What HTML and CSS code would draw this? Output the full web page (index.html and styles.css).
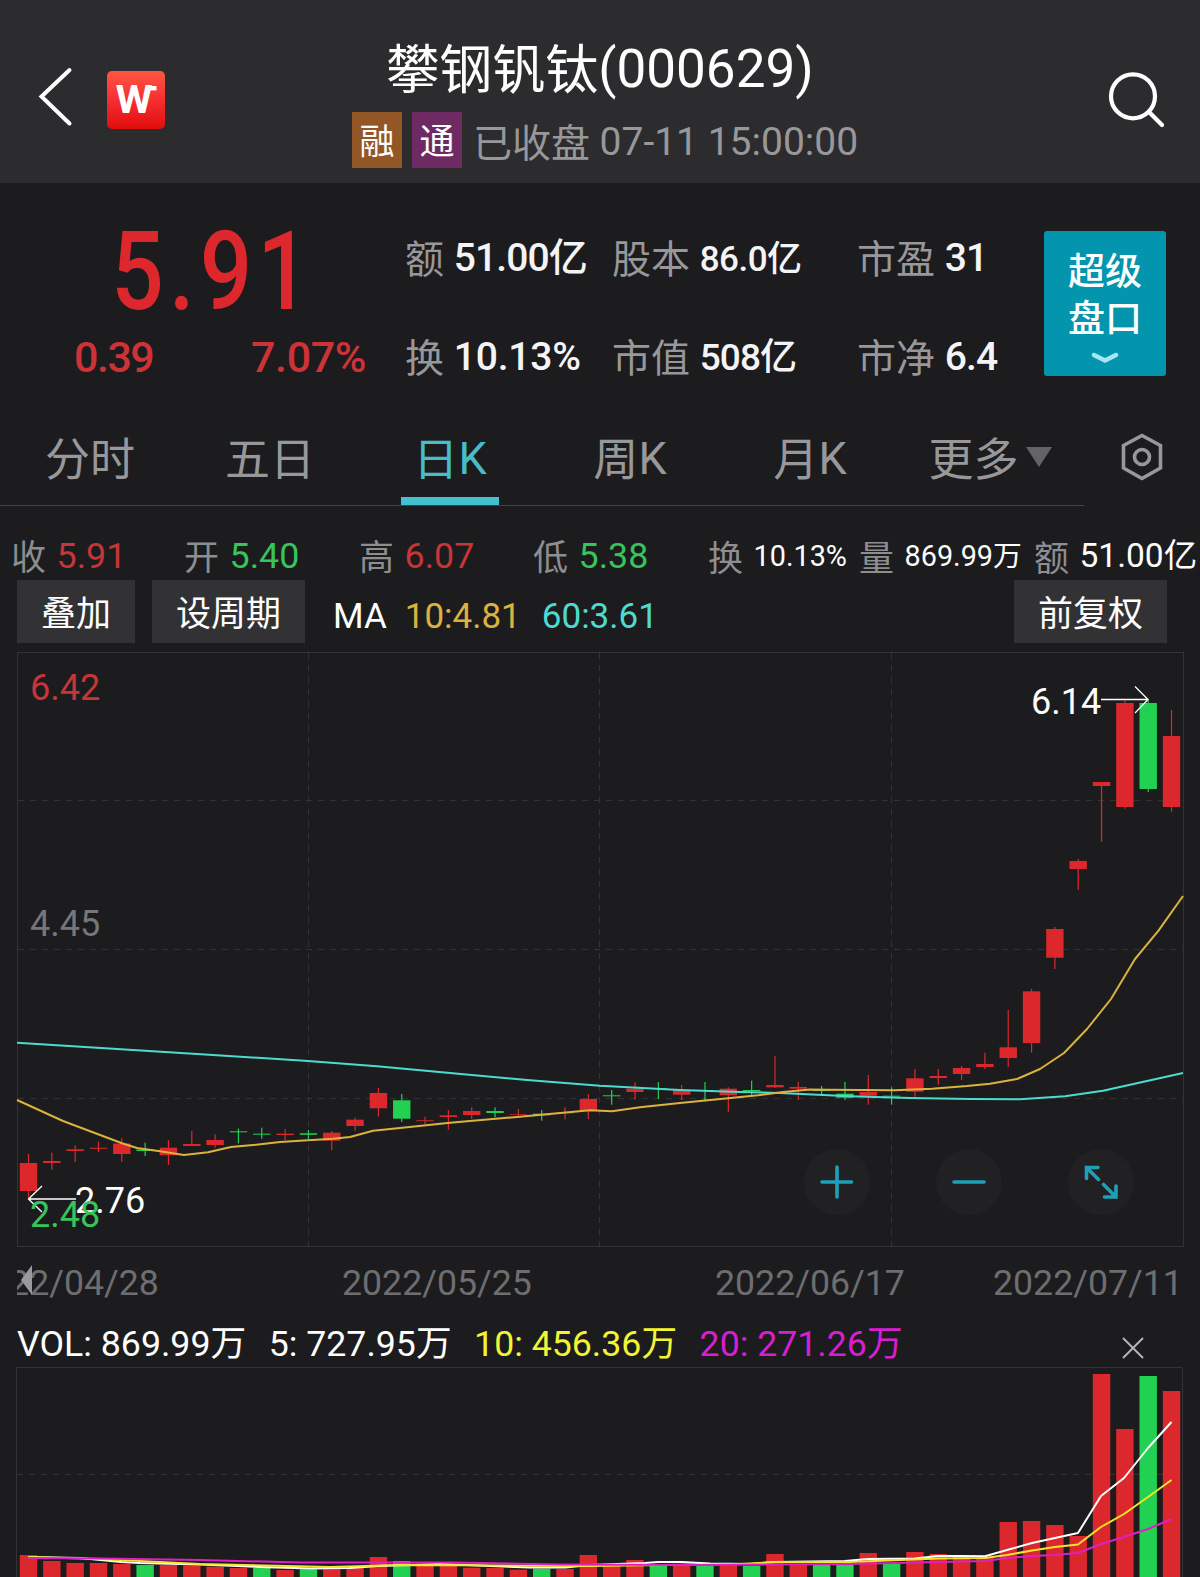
FILE: index.html
```html
<!DOCTYPE html>
<html lang="zh-CN">
<head>
  <meta charset="UTF-8">
  <meta name="viewport" content="width=device-width, initial-scale=1">
  <title>攀钢钒钛(000629)</title>
  <link rel="stylesheet" href="styles.css">
</head>
<body>

<header class="header">
  <div class="header-left">
    <svg class="back" width="40" height="64" viewBox="0 0 40 64"><path d="M34.500 6 L6.500 32.500 L34.500 59.500"/></svg>
    <div class="logo">
      <svg width="58" height="58" viewBox="0 0 58 58">
        <text x="8.500" y="42" textLength="37" lengthAdjust="spacingAndGlyphs">W</text>
        <path d="M42 17.200 h7.500"/>
      </svg>
    </div>
  </div>
  <div class="header-title">
    <h1><span class="cjk">攀钢钒钛</span>(000629)</h1>
    <div class="status">
      <span class="badge badge-rong">融</span>
      <span class="badge badge-tong">通</span>
      <span class="status-text"><span class="cjk">已收盘</span> 07-11 15:00:00</span>
    </div>
  </div>
  <svg class="search" width="64" height="64" viewBox="0 0 64 64">
    <circle cx="29" cy="28.300" r="22"/>
    <path d="M45 44 L58 57"/>
  </svg>
</header>

<section class="quote">
  <div class="price-box">
    <div class="price"><span>5.91</span></div>
    <div class="change"><span class="diff">0.39</span><span>7.07%</span></div>
  </div>
  <div class="stats">
    <div><span class="cjk">额</span> <b>51.00亿</b></div>
    <div><span class="cjk">股本</span> <b class="s35">86.0亿</b></div>
    <div><span class="cjk">市盈</span> <b>31</b></div>
    <div><span class="cjk">换</span> <b class="wide">10.13%</b></div>
    <div><span class="cjk">市值</span> <b class="s38">508亿</b></div>
    <div><span class="cjk">市净</span> <b>6.4</b></div>
  </div>
  <div class="super-btn">
    超级<br>盘口
    <svg width="30" height="14" viewBox="0 0 30 14"><path d="M4 4 L15 9.500 L26 4"/></svg>
  </div>
</section>

<div class="tabs-row">
  <nav class="tabs">
    <a><span class="cjk">分时</span></a>
    <a><span class="cjk">五日</span></a>
    <a class="active"><span class="cjk">日</span>K</a>
    <a><span class="cjk">周</span>K</a>
    <a><span class="cjk">月</span>K</a>
    <a><span class="cjk">更多</span><i class="caret"></i></a>
  </nav>
  <svg class="setting" width="44" height="50" viewBox="0 0 44 50">
    <path d="M22 3.500 L40.500 13.500 V36 L22 46.500 L3.500 36 V13.500 Z"/>
    <circle cx="22" cy="25" r="7.500"/>
  </svg>
</div>

<div class="ohlc">
  <div><i class="cjk">收</i><span class="red">5.91</span></div>
  <div><i class="cjk">开</i><span class="green">5.40</span></div>
  <div><i class="cjk">高</i><span class="red">6.07</span></div>
  <div><i class="cjk">低</i><span class="green">5.38</span></div>
  <div><i class="cjk">换</i><span class="small">10.13%</span></div>
  <div><i class="cjk">量</i><span class="small">869.99万</span></div>
  <div><i class="cjk">额</i><span class="mid">51.00亿</span></div>
</div>

<div class="toolbar">
  <button class="btn">叠加</button>
  <button class="btn">设周期</button>
  <div class="ma"><span>MA</span><span class="ma10">10:4.81</span><span class="ma60">60:3.61</span></div>
  <button class="btn btn-right">前复权</button>
</div>

<svg class="chart" width="1200" height="607" viewBox="0 643 1200 607">
  <g class="grid">
    <path class="dash" d="M308.500 653 V1246 M599.500 653 V1246 M891.500 653 V1246"/>
    <path class="dash" d="M18 800.500 H1183 M18 949.500 H1183 M18 1098.500 H1183"/>
    <rect x="17.500" y="652.500" width="1166" height="594"/>
  </g>
  <g id="candles"></g>
  <polyline class="line line-ma60" points="17,1042.7 117,1049 217,1055.3 308,1061 377,1066.3 450,1073 527,1080 600,1085.7 680,1090 740,1092 780,1093 850,1096.3 910,1098 970,1099 1020,1099.3 1065,1096.3 1103,1090.7 1147,1081 1183,1073"/>
  <polyline class="line line-ma10" points="17,1100 63,1121 122,1143.3 137,1148 160,1151.3 184,1155 208,1152.3 231,1147 253,1145 280,1142 308,1140.3 333,1138.7 350,1137 373,1130.7 400,1128 450,1122.7 517,1117 590,1110.3 612,1111.3 640,1107.3 680,1103 728,1098.3 758,1095.3 783,1092 810,1089.5 827,1089.7 895,1090.3 932,1088.7 967,1086 990,1083.7 1017,1079 1040,1069 1064,1053 1087,1029 1111,999 1135,959 1158.5,930.7 1183,896"/>
  <path class="arrow" d="M1101 699.500 H1148 M1135 686.500 L1148 699.500 L1135 713"/>
  <path class="arrow" d="M76 1199 H28.500 M42 1186 L28.500 1199 L42 1212"/>
  <text class="white" x="1031" y="714">6.14</text>
  <text class="white" x="75" y="1213">2.76</text>
  <text class="red" x="30" y="700">6.42</text>
  <text class="gray" x="30" y="936">4.45</text>
  <text class="green" x="30" y="1227">2.48</text>
  <g class="zoom-btns">
    <circle cx="837" cy="1182" r="33"/>
    <circle cx="969" cy="1182" r="33"/>
    <circle cx="1101" cy="1182" r="33"/>
    <path d="M822 1182 H851.500 M837 1167 V1197"/>
    <path d="M954 1182 H984"/>
    <path d="M1086.500 1178.500 V1167.500 H1098 M1086.500 1167.500 L1098.500 1179.500"/>
    <path d="M1116 1186 V1197 H1104.500 M1116 1197 L1103.500 1184.500"/>
  </g>
</svg>

<div class="dates">
  <span>2022/04/28</span>
  <span>2022/05/25</span>
  <span>2022/06/17</span>
  <span>2022/07/11</span>
  <i class="prev"></i>
</div>

<div class="vol-info">
  <span>VOL: 869.99万</span>
  <span>5: 727.95万</span>
  <span class="yellow">10: 456.36万</span>
  <span class="pink">20: 271.26万</span>
  <svg class="close" width="24" height="24" viewBox="0 0 24 24"><path d="M2 2 L22 22 M22 2 L2 22"/></svg>
</div>

<svg class="chart" width="1200" height="210" viewBox="0 1367 1200 210">
  <g class="grid">
    <path class="dash" d="M17 1474.500 H1182"/>
    <path d="M16.500 1577 V1367.500 H1182.500 V1577"/>
  </g>
  <g id="volumes"></g>
  <polyline class="line line-white" points="28.5,1557 80,1558 121,1562 140,1563 200,1564.5 260,1567 310,1568.5 350,1568 378,1566 440,1564 490,1566 530,1567.5 565,1567.5 590,1565 645,1563 658,1562 682,1562 710,1563.5 750,1564 775,1562 845,1561 868,1559 915,1558.5 938,1556 960,1556 985,1556.3 1007,1550 1032,1543 1055,1538 1078,1533 1101,1496 1124,1478 1148,1448 1171.5,1422"/>
  <polyline class="line line-yellow" points="28.5,1557 100,1559 200,1564 330,1567 400,1565 590,1566 740,1564 775,1562 850,1562 938,1558.5 985,1558 1007,1555 1032,1550.5 1055,1547 1078,1544.5 1101,1527 1124,1514 1148,1497 1171.5,1480"/>
  <polyline class="line line-pink" points="28.5,1558 100,1558.5 200,1560 300,1562.5 450,1562.5 560,1564.5 700,1565 850,1564 938,1562 985,1561 1007,1558 1032,1556 1055,1555 1078,1553 1101,1544 1124,1537 1148,1529 1171.5,1519"/>
</svg>

<script src="chart.js"></script>
</body>
</html>
```
FILE: styles.css
```css
* {
  box-sizing: border-box;
}
body {
  margin: 0;
  width: 1200px;
  height: 1577px;
  overflow: hidden;
  background: #1c1c1e;
  color: #fff;
  font-family: Roboto, "Noto Sans CJK SC", sans-serif;
}
svg {
  display: block;
}
.cjk {
  font-style: normal;
  line-height: 1;
  vertical-align: -2px;
}

/* header */
.header {
  display: flex;
  justify-content: space-between;
  height: 183px;
  background: #2c2c2e;
}
.header-left {
  display: flex;
  width: 300px;
  padding-left: 35px;
}
.back {
  margin-top: 64px;
  fill: none;
  stroke: #fff;
  stroke-width: 4;
  stroke-linecap: round;
}
.logo {
  width: 58px;
  height: 58px;
  margin: 71px 0 0 32px;
  border-radius: 5px;
  background: linear-gradient(#ff5640, #f52f33 50%, #e00c0c);
}
.logo text {
  fill: #fff;
  font-size: 38px;
  font-weight: 700;
}
.logo path {
  stroke: #fff;
  stroke-width: 4.4;
}
.header-title {
  padding-top: 39px;
  text-align: center;
}
h1 {
  margin: 0;
  font-size: 53px;
  font-weight: 400;
  line-height: 60px;
}
.status {
  display: flex;
  justify-content: center;
  margin: 13px 0 0 10px;
}
.badge {
  width: 50px;
  height: 56px;
  margin-right: 10px;
  font-size: 35px;
  line-height: 61px;
}
.badge-rong {
  background: #935627;
}
.badge-tong {
  background: #6e2b63;
}
.status-text {
  height: 56px;
  padding-left: 1px;
  color: #98989a;
  font-size: 39px;
  line-height: 60px;
}
.search {
  margin: 68px 32px 0 204px;
  fill: none;
  stroke: #fff;
  stroke-width: 4.2;
  stroke-linecap: round;
}

/* quote */
.quote {
  display: flex;
  height: 229px;
  padding-top: 26px;
}
.price-box {
  width: 405px;
  padding-top: 8px;
}
.price {
  width: 426px;
  color: #dc282c;
  font-size: 110px;
  font-weight: 500;
  line-height: 110px;
  letter-spacing: 6px;
  text-align: center;
}
.price span {
  display: inline-block;
  transform: scaleX(0.84);
}
.change {
  display: flex;
  justify-content: space-between;
  padding: 0 39px 0 74px;
  margin-top: 5px;
  color: #cd3237;
  font-size: 43px;
  font-weight: 500;
  line-height: 50px;
  letter-spacing: -0.4px;
}
.change .diff {
  letter-spacing: -1.5px;
}
.stats {
  display: grid;
  grid-template-columns: 207px 245px 187px;
  grid-template-rows: 99px 99px;
  color: #98989a;
  font-size: 39px;
  line-height: 99px;
  white-space: nowrap;
}
.stats b {
  color: #f4f4f6;
  font-weight: 500;
  letter-spacing: -0.9px;
}
.stats .wide {
  letter-spacing: -0.2px;
}
.stats .s35 {
  font-size: 35px;
  letter-spacing: -0.5px;
}
.stats .s38 {
  font-size: 37px;
}
.super-btn {
  width: 122px;
  height: 145px;
  margin-top: 22px;
  padding-top: 18px;
  border-radius: 3px;
  background: #0394ae;
  font-size: 37px;
  font-weight: 500;
  line-height: 47px;
  text-align: center;
}
.super-btn svg {
  margin: 8px auto 0;
  fill: none;
  stroke: #a8e6f4;
  stroke-width: 4.5;
  stroke-linecap: round;
  stroke-linejoin: round;
}

/* tabs */
.tabs-row {
  display: flex;
  height: 94px;
}
.tabs {
  display: grid;
  grid-template-columns: repeat(6, 180px);
  width: 1084px;
  border-bottom: 1px solid #434345;
  color: #98989a;
  font-size: 45px;
  line-height: 93px;
  text-align: center;
}
.tabs a {
  position: relative;
  white-space: nowrap;
}
.tabs .active {
  color: #48bccb;
}
.tabs .active::after {
  content: "";
  position: absolute;
  left: 41px;
  bottom: 0;
  width: 98px;
  height: 8px;
  background: #43c0d0;
}
.caret {
  display: inline-block;
  margin-left: 7px;
  border: 13.5px solid transparent;
  border-top: 20px solid #646466;
  border-bottom: 0;
  vertical-align: 7px;
}
.setting {
  margin: 20px 0 0 36px;
  fill: none;
  stroke: #98989a;
  stroke-width: 3.6;
}

/* ohlc */
.ohlc {
  display: grid;
  grid-template-columns: 173px 175px 174px 175px 151px 175px 166px;
  height: 44px;
  margin-top: 28px;
  padding-left: 11px;
  color: #8e8e90;
  font-size: 35px;
  line-height: 44px;
  white-space: nowrap;
}
.ohlc span {
  margin-left: 10.5px;
  font-size: 35.8px;
}
.red {
  color: #c73539;
  fill: #c73539;
}
.green {
  color: #37c45b;
  fill: #37c45b;
}
.ohlc .small {
  color: #fff;
  font-size: 28.8px;
  vertical-align: 2.5px;
}
.ohlc .mid {
  color: #fff;
  font-size: 33.5px;
  vertical-align: 1.5px;
}

/* toolbar */
.toolbar {
  display: flex;
  height: 63px;
  margin-top: 2px;
  padding: 0 33px 0 17px;
}
.btn {
  margin: 0 17px 0 0;
  padding: 7px 24px 0;
  border: 0;
  background: #323234;
  color: #fff;
  font-family: inherit;
  font-size: 35px;
  line-height: 56px;
}
.btn-right {
  margin: 0 0 0 auto;
}
.ma {
  display: flex;
  margin-left: 11px;
  font-size: 35px;
  line-height: 74px;
}
.ma10 {
  margin-left: 18px;
  color: #dcb23e;
}
.ma60 {
  margin-left: 21px;
  color: #4cdccf;
}

/* charts */
.chart text {
  font-size: 36px;
}
.white {
  fill: #fff;
}
.gray {
  fill: #77777a;
}
.grid {
  fill: none;
  stroke: #333335;
}
.dash {
  stroke-dasharray: 6 6;
}
.line {
  fill: none;
  stroke-width: 2;
  stroke-linejoin: round;
}
.line-ma10 {
  stroke: #dcb23e;
}
.line-ma60 {
  stroke: #4cdccf;
}
.line-white {
  stroke: #fff;
}
.line-yellow {
  stroke: #f4e52a;
}
.line-pink {
  stroke: #dd20c4;
}
.arrow {
  fill: none;
  stroke: #fff;
  stroke-width: 1.3;
}
.up {
  fill: #dc282c;
}
.down {
  fill: #22d052;
}
.zoom-btns circle {
  fill: #212124;
}
.zoom-btns path {
  fill: none;
  stroke: #1fa0b9;
  stroke-width: 3.6;
  stroke-linecap: round;
}

/* dates */
.dates {
  position: relative;
  display: flex;
  height: 66px;
  margin-left: 17px;
  overflow: hidden;
  color: #6e6e70;
  font-size: 35.7px;
  line-height: 66px;
}
.dates span {
  flex: none;
  width: 190px;
  margin-right: 183px;
}
.dates span:first-child {
  margin-left: -48px;
}
.dates span:nth-child(3) {
  margin-right: 88px;
}
.prev {
  position: absolute;
  left: 4px;
  top: 15px;
  border: 15.5px solid transparent;
  border-right: 11px solid #9a9a9c;
  border-left: 0;
}

/* volume */
.vol-info {
  display: flex;
  height: 51px;
  padding: 5px 55px 0 17px;
  font-size: 35.7px;
  line-height: 47px;
  white-space: pre;
}
.vol-info span {
  margin-right: 22.5px;
}
.yellow {
  color: #f2f535;
}
.pink {
  color: #d61fd0;
}
.close {
  margin: 15px 0 0 auto;
  stroke: #b4b4b6;
  stroke-width: 2;
}
```
FILE: chart.js
```js
// [up/down, body top, body bottom, high, low]
const candles = [
  ['r', 1163, 1191, 1154, 1198], ['r', 1161, 1163, 1152.5, 1169.5], ['r', 1149.3, 1151, 1145.5, 1162],
  ['r', 1147.8, 1148.8, 1141.5, 1152], ['r', 1143.5, 1154, 1138, 1162], ['g', 1149.5, 1151, 1142.7, 1156],
  ['r', 1147.7, 1155.3, 1140, 1165], ['r', 1144, 1146, 1131, 1146], ['r', 1140, 1145, 1134.5, 1147.5],
  ['g', 1131.3, 1132.3, 1128.5, 1143.3], ['g', 1133.7, 1134.7, 1127.7, 1138.7], ['r', 1133.7, 1135, 1129, 1140],
  ['g', 1133.3, 1134.8, 1130, 1139], ['r', 1132.7, 1140.7, 1131, 1150], ['r', 1119.7, 1126, 1117.5, 1130.7],
  ['r', 1093, 1108.3, 1088, 1116.5], ['g', 1100.3, 1118.7, 1094, 1122], ['r', 1120.3, 1121.2, 1116.7, 1124],
  ['r', 1115.3, 1117, 1110, 1129.7], ['r', 1111, 1115, 1107.3, 1119], ['g', 1111, 1113, 1107.3, 1117.3],
  ['r', 1114, 1114.7, 1109, 1115.7], ['g', 1113.7, 1115.3, 1110, 1120.7], ['r', 1112.3, 1113.3, 1107.3, 1119.3],
  ['r', 1099, 1110, 1094, 1119], ['g', 1095.3, 1096.3, 1090, 1104.7], ['r', 1088.7, 1092, 1082.3, 1099.7],
  ['g', 1088.3, 1089, 1082, 1099], ['r', 1090, 1094.7, 1085, 1100], ['g', 1090.3, 1091, 1082, 1100],
  ['r', 1088.7, 1095.3, 1087.3, 1112], ['g', 1090, 1091, 1080.7, 1095], ['r', 1085, 1087.3, 1056, 1088],
  ['r', 1087, 1088.7, 1082, 1100], ['g', 1089, 1091, 1086, 1095], ['g', 1093.7, 1097.7, 1082, 1100],
  ['r', 1092, 1095.7, 1075, 1104.7], ['g', 1095.7, 1096.5, 1087.3, 1104.7], ['r', 1078.3, 1091.7, 1069, 1096.7],
  ['r', 1076, 1078, 1069, 1084.7], ['r', 1068, 1074, 1066, 1080], ['r', 1064, 1067, 1052.7, 1069],
  ['r', 1047.3, 1058, 1010, 1067], ['r', 991.3, 1043, 989, 1052.7], ['r', 929, 957.7, 927, 969],
  ['r', 861, 869, 859, 890], ['r', 782, 786, 782, 841.7], ['r', 703, 807, 700.3, 808.7],
  ['g', 703, 789, 699.5, 792], ['r', 736, 807, 710, 811.7]
];

const volumes = [
  1555, 1561, 1563, 1563, 1564, 1565, 1565, 1565.5, 1566.7, 1568,
  1568, 1570, 1569.3, 1569.3, 1568, 1557, 1561, 1566, 1566, 1567.7,
  1568, 1569.7, 1568.7, 1569, 1555, 1565.7, 1560, 1566, 1565.7, 1566,
  1565, 1565.7, 1554, 1565, 1565, 1565, 1553, 1564, 1552, 1554,
  1555.7, 1556.7, 1522, 1521, 1525, 1536, 1374, 1429, 1376, 1391
];
const volumeDown = [5, 10, 12, 16, 22, 27, 29, 31, 34, 35, 37, 48];

const STEP = 23.327;
const WIDTH = 17.4;

function rect(cls, x, y, w, h) {
  return `<rect class="${cls}" x="${x}" y="${y}" width="${w}" height="${h}"/>`;
}

let html = '';
candles.forEach((c, i) => {
  const x = 28.5 + i * STEP;
  const cls = c[0] === 'r' ? 'up' : 'down';
  html += rect(cls, x - WIDTH / 2, c[1], WIDTH, c[2] - c[1]);
  html += rect(cls, x - 0.6, c[3], 1.2, c[4] - c[3]);
});
document.getElementById('candles').innerHTML = html;

html = '';
volumes.forEach((top, i) => {
  const x = 28.5 + i * STEP;
  html += rect(volumeDown.includes(i) ? 'down' : 'up', x - WIDTH / 2, top, WIDTH, 1577 - top);
});
document.getElementById('volumes').innerHTML = html;
```
